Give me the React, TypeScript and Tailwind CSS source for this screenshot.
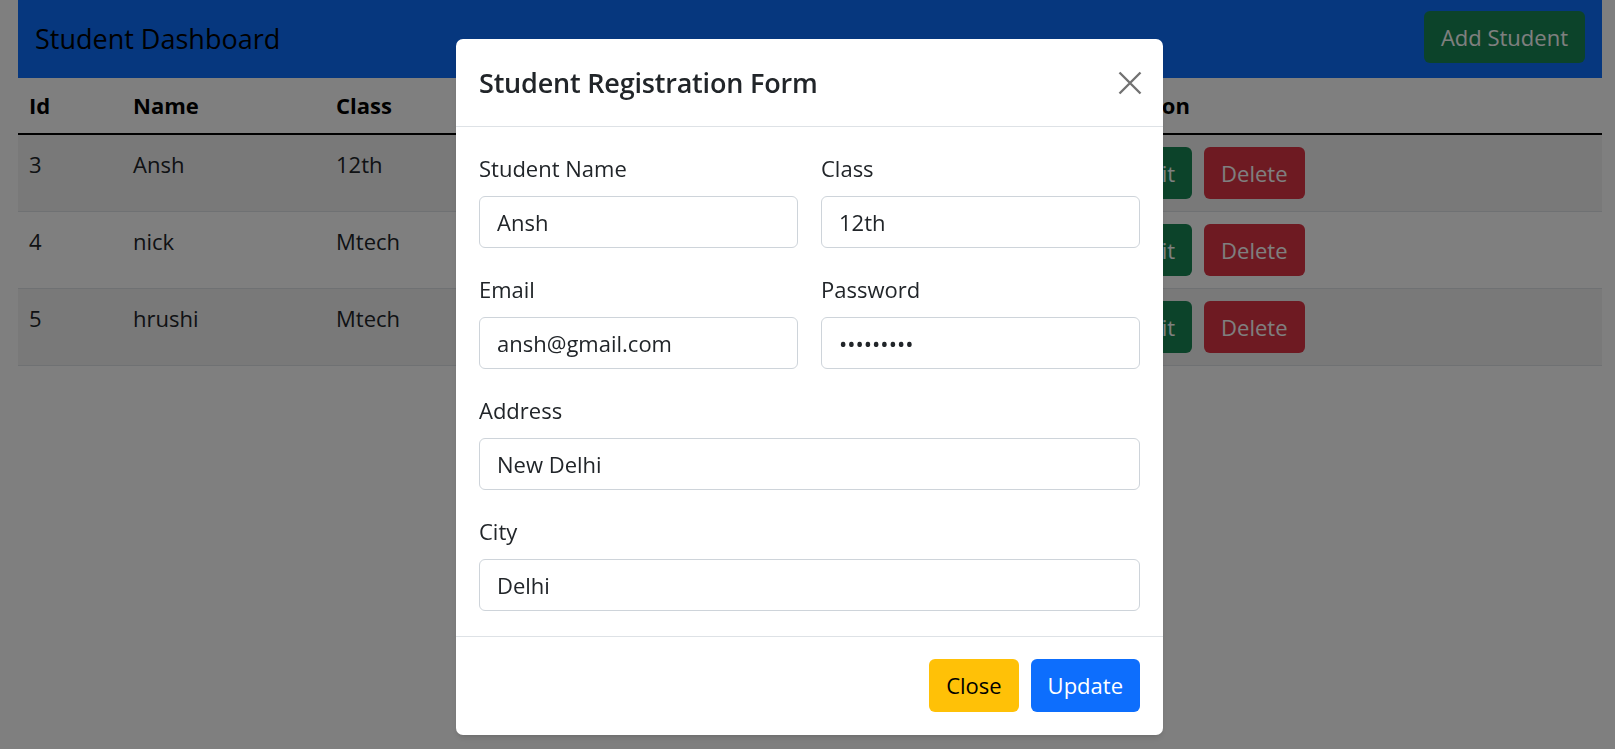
import { useState } from 'react';

const STUDENTS = [
  { id: 3, name: 'Ansh', cls: '12th' },
  { id: 4, name: 'nick', cls: 'Mtech' },
  { id: 5, name: 'hrushi', cls: 'Mtech' },
];

function Field({ label, value, type = 'text' }: { label: string; value: string; type?: string }) {
  return (
    <div>
      <label className="block leading-[33px] mb-[11px]">{label}</label>
      <input
        type={type}
        readOnly
        value={value}
        className="block w-full h-[52px] px-[17px] rounded-[6px] border border-[#ced4da] bg-white text-[#212529] text-[22px] outline-none"
      />
    </div>
  );
}

function StudentModal() {
  return (
    <div className="fixed top-[39px] left-[456px] w-[707px] bg-white rounded-[7px] shadow-md text-[#212529]">
      <div className="flex items-center justify-between h-[88px] px-[23px] border-b border-[#dee2e6]">
        <h5 className="text-[27px] font-semibold leading-[40px] tracking-[-0.2px]">Student Registration Form</h5>
        <button className="w-[24px] h-[24px] mr-[-2px] flex items-center justify-center">
          <svg width="24" height="24" viewBox="0 0 24 24" className="opacity-55">
            <path d="M1.5 1.5 L22.5 22.5 M22.5 1.5 L1.5 22.5" stroke="#000" strokeWidth="2.4" fill="none" />
          </svg>
        </button>
      </div>
      <div className="px-[23px] pt-[25px] pb-[25px] flex flex-col gap-[25px]">
        <div className="grid grid-cols-2 gap-x-[23px] gap-y-[25px]">
          <Field label="Student Name" value="Ansh" />
          <Field label="Class" value="12th" />
          <Field label="Email" value="ansh@gmail.com" />
          <Field label="Password" type="password" value="ansh@1234" />
        </div>
        <Field label="Address" value="New Delhi" />
        <Field label="City" value="Delhi" />
      </div>
      <div className="flex justify-end gap-[12px] px-[23px] pt-[22px] pb-[23px] border-t border-[#dee2e6]">
        <button className="h-[53px] px-[17px] rounded-[6px] bg-[#ffc107] text-black">Close</button>
        <button className="h-[53px] px-[17px] rounded-[6px] bg-[#0d6efd] text-white">Update</button>
      </div>
    </div>
  );
}

export default function App() {
  const [students] = useState(STUDENTS);

  return (
    <div className="min-h-[749px] bg-white font-['Open_Sans',sans-serif] text-[22px] text-[#212529]">
      <div className="ml-[18px] w-[1584px]">
        <div className="flex items-center justify-between h-[78px] pl-[17px] pr-[17px] bg-[#0d6efd]">
          <span className="text-[27px] text-black">Student Dashboard</span>
          <button className="h-[52px] px-[17px] mb-[4px] rounded-[6px] bg-[#198754] text-white">Add Student</button>
        </div>

        <table className="w-full border-collapse text-left">
          <thead>
            <tr className="border-b-2 border-black">
              <th className="w-[104px] px-[11px] py-[11px] leading-[33px] font-bold text-black">Id</th>
              <th className="w-[203px] px-[11px] py-[11px] leading-[33px] font-bold text-black">Name</th>
              <th className="w-[200px] px-[11px] py-[11px] leading-[33px] font-bold text-black">Class</th>
              <th className="w-[583px] px-[11px] py-[11px] leading-[33px] font-bold text-black"></th>
              <th className="px-[11px] py-[11px] leading-[33px] font-bold text-black">Action</th>
            </tr>
          </thead>
          <tbody>
            {students.map((s, i) => (
              <tr key={s.id} className={`border-b border-[#dee2e6] align-top ${i % 2 === 0 ? 'bg-black/5' : ''}`}>
                <td className="px-[11px] pt-[13px] pb-[11px] leading-[33px]">{s.id}</td>
                <td className="px-[11px] pt-[13px] pb-[11px] leading-[33px]">{s.name}</td>
                <td className="px-[11px] pt-[13px] pb-[11px] leading-[33px]">{s.cls}</td>
                <td className="px-[11px] pt-[13px] pb-[11px] leading-[33px]"></td>
                <td className="px-[11px] py-[12px]">
                  <div className="flex gap-[12px]">
                    <button className="h-[52px] px-[17px] rounded-[6px] bg-[#198754] text-white">Edit</button>
                    <button className="h-[52px] px-[17px] rounded-[6px] bg-[#dc3545] text-white">Delete</button>
                  </div>
                </td>
              </tr>
            ))}
          </tbody>
        </table>
      </div>

      <div className="fixed inset-0 bg-black/50" />
      <StudentModal />
    </div>
  );
}
